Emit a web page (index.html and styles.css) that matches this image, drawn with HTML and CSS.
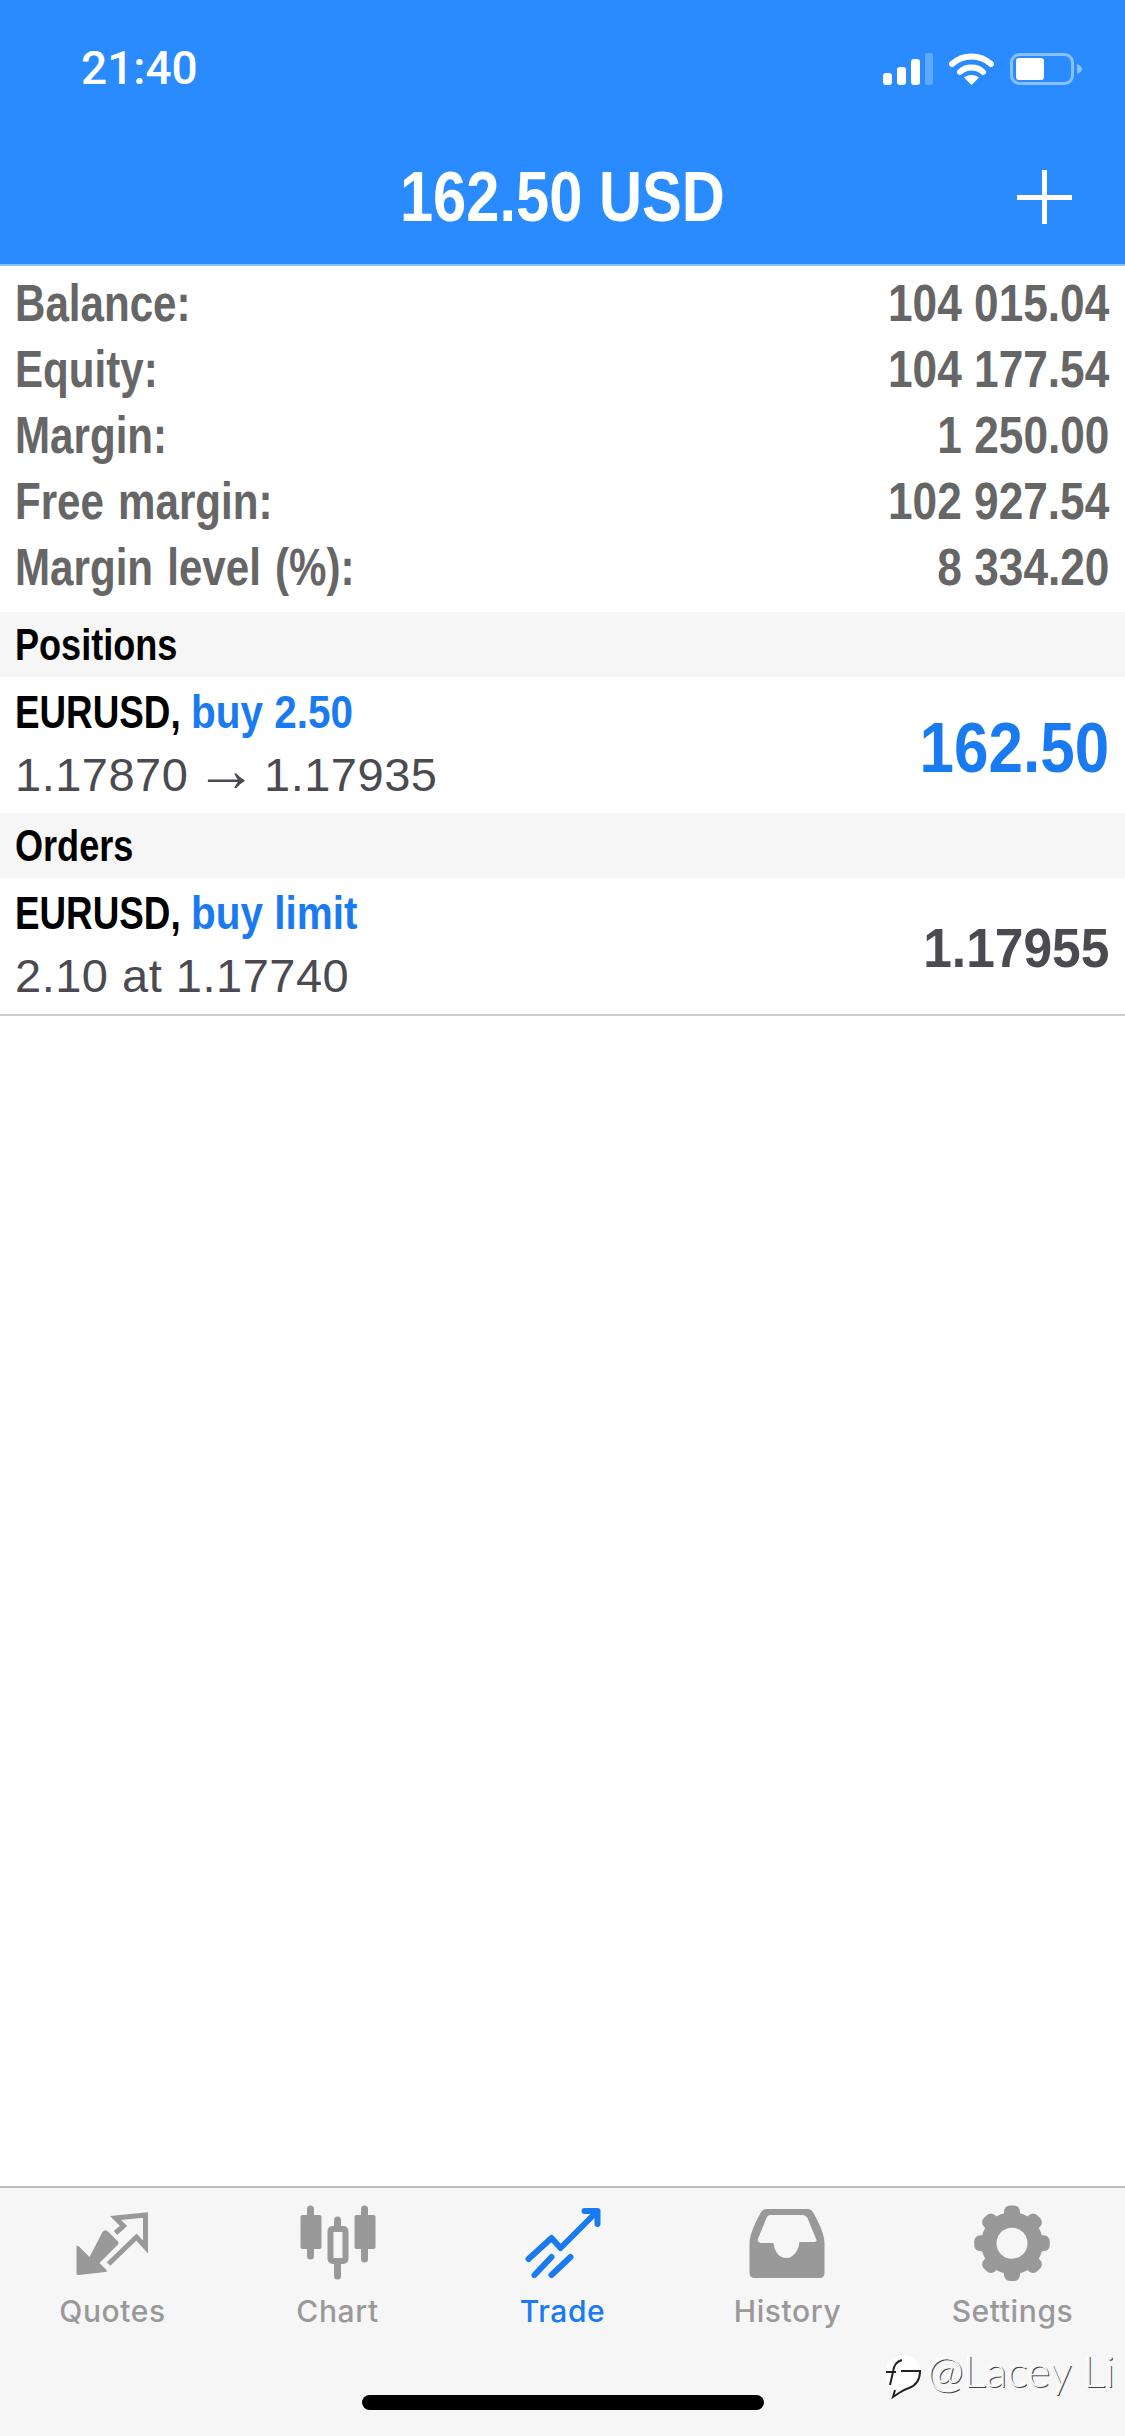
FILE: index.html
```html
<!DOCTYPE html>
<html>
<head>
    <title>Trade</title>
    <link rel="stylesheet" href="styles.css">
</head>
<body>
    <header class="top">
        <div class="status">
            <span class="time">21:40</span>
            <div class="status-icons">
                <svg width="50" height="32" viewBox="0 0 50 32">
                    <rect x="0" y="20" width="9" height="12" rx="3" fill="#fff"/>
                    <rect x="14" y="14" width="9" height="18" rx="3" fill="#fff"/>
                    <rect x="28" y="6" width="9" height="26" rx="3" fill="#fff"/>
                    <rect x="42" y="0" width="8" height="32" rx="2" fill="#fff" opacity="0.25"/>
                </svg>
                <svg width="45" height="32" viewBox="0 0 45 32">
                    <path d="M3 11 C14 1 31 1 42 11" fill="none" stroke="#fff" stroke-width="6" stroke-linecap="round"/>
                    <path d="M11 19 C17 13 28 13 34 19" fill="none" stroke="#fff" stroke-width="6" stroke-linecap="round"/>
                    <path d="M22.5 32 L15 24.5 C19 21 26 21 30 24.5 Z" fill="#fff"/>
                </svg>
                <svg width="72" height="32" viewBox="0 0 72 32">
                    <rect x="1.5" y="1.5" width="61" height="29" rx="8" fill="none" stroke="#fff" stroke-opacity="0.45" stroke-width="3"/>
                    <rect x="6" y="5" width="28" height="22" rx="3" fill="#fff"/>
                    <path d="M67 11 C70 12 72 14 72 16 C72 18 70 20 67 21 Z" fill="#fff" fill-opacity="0.45"/>
                </svg>
            </div>
        </div>
        <div class="title-bar">
            <span></span>
            <h1 class="title">162.50 USD</h1>
            <svg class="plus" width="55" height="54" viewBox="0 0 55 54">
                <rect x="25" y="0" width="5" height="54" fill="#fff"/>
                <rect x="0" y="25" width="55" height="5" fill="#fff"/>
            </svg>
        </div>
    </header>

    <main class="content">
        <section class="summary">
            <div class="summary-row"><span>Balance:</span><span>104 015.04</span></div>
            <div class="summary-row"><span>Equity:</span><span>104 177.54</span></div>
            <div class="summary-row"><span>Margin:</span><span>1 250.00</span></div>
            <div class="summary-row"><span>Free margin:</span><span>102 927.54</span></div>
            <div class="summary-row"><span>Margin level (%):</span><span>8 334.20</span></div>
        </section>

        <h2 class="band"><span>Positions</span></h2>
        <div class="item">
            <div>
                <div class="item-name">EURUSD, <span class="blue">buy 2.50</span></div>
                <div class="item-detail">1.17870 <span class="arrow">→</span> 1.17935</div>
            </div>
            <div class="profit">162.50</div>
        </div>

        <h2 class="band"><span>Orders</span></h2>
        <div class="item item-last">
            <div>
                <div class="item-name">EURUSD, <span class="blue">buy limit</span></div>
                <div class="item-detail">2.10 at 1.17740</div>
            </div>
            <div class="price">1.17955</div>
        </div>
    </main>

    <footer class="tabbar">
        <nav class="tabs">
            <div class="tab">
                <svg width="110" height="95" viewBox="-2.5 0 110 95">
                    <path d="M16 79 L16 52 Q16 50 18 51 L29 62 L42 37 Q44 34 47 36 L57 46 Q59 48 57 50 L39 68 L46 75 Q47 77 45 77 L18 80 Q16 80 16 79 Z" fill="#999"/>
                    <polyline points="48,69 76,42 85,52 85,20 55,23 63,31 55,38" fill="none" stroke="#999" stroke-width="5"/>
                </svg>
                <span>Quotes</span>
            </div>
            <div class="tab">
                <svg width="110" height="95" viewBox="-2.5 0 110 95">
                    <g stroke="#999" stroke-width="7" stroke-linecap="round">
                        <line x1="25" y1="14" x2="25" y2="61"/>
                        <line x1="52" y1="25" x2="52" y2="81"/>
                        <line x1="79" y1="14" x2="79" y2="64"/>
                    </g>
                    <rect x="15" y="20" width="21" height="34" rx="2" fill="#999"/>
                    <rect x="69" y="20" width="21" height="34" rx="2" fill="#999"/>
                    <rect x="45" y="34" width="15" height="32" rx="2" fill="#f6f6f6" stroke="#999" stroke-width="6"/>
                </svg>
                <span>Chart</span>
            </div>
            <div class="tab tab-active">
                <svg width="110" height="95" viewBox="-2.5 0 110 95">
                    <g fill="none" stroke="#1a7af0" stroke-linecap="round" stroke-linejoin="round" stroke-width="6">
                        <polyline points="18,64 41,43 50,53 85,18"/>
                        <polyline points="74,16 87,16 87,29"/>
                        <line x1="24" y1="80" x2="41" y2="62"/>
                        <line x1="41" y1="80" x2="60" y2="62"/>
                    </g>
                </svg>
                <span>Trade</span>
            </div>
            <div class="tab">
                <svg width="110" height="95" viewBox="-2.5 0 110 95">
                    <path fill-rule="evenodd" fill="#999" d="M31 14 H72 Q76 14 78 18 Q89 38 89 48 V78 Q89 83 84 83 H19 Q14 83 14 78 V48 Q14 38 25 18 Q27 14 31 14 Z M35 20 H67 Q70 20 72 23 L81 45 Q81 47 78 47 H64 C63 57 57 63 51 63 C44 63 39 57 38 48 H25 Q22 47 22 45 L31 23 Q32 20 35 20 Z"/>
                </svg>
                <span>History</span>
            </div>
            <div class="tab">
                <svg width="110" height="95" viewBox="-2.5 0 110 95">
                    <g fill="#999">
                        <rect x="43.5" y="10.5" width="16" height="75.5" rx="6"/>
                        <rect x="43.5" y="10.5" width="16" height="75.5" rx="6" transform="rotate(45 51.5 48.25)"/>
                        <rect x="43.5" y="10.5" width="16" height="75.5" rx="6" transform="rotate(90 51.5 48.25)"/>
                        <rect x="43.5" y="10.5" width="16" height="75.5" rx="6" transform="rotate(135 51.5 48.25)"/>
                        <circle cx="51.5" cy="48.25" r="31"/>
                    </g>
                    <circle cx="51.5" cy="48.25" r="15.5" fill="#f6f6f6"/>
                </svg>
                <span>Settings</span>
            </div>
        </nav>
        <div class="home-bar"></div>
        <div class="watermark">
            <svg width="44" height="56" viewBox="0 0 44 56">
                <g transform="translate(0 8)">
                    <circle cx="20" cy="19" r="18" fill="#fff"/>
                    <path d="M8 40 L10 33 Q8 30 8 28 L26 33 Q18 38 8 40 Z" fill="#fff"/>
                    <path d="M3 18 H13 M19 6 Q11 8 10 18 L7 31 M18 17 H37 Q37 30 26 34 Q20 36 16 39 L10 43 L12 36" fill="none" stroke="#222" stroke-width="2"/>
                </g>
            </svg>
            <span>@Lacey Li</span>
        </div>
    </footer>
</body>
</html>
```

FILE: styles.css
```css
* {
    box-sizing: border-box;
}
body {
    margin: 0;
    height: 2436px;
    display: flex;
    flex-direction: column;
    background-color: #fff;
    font-family: "Liberation Sans", Arial, sans-serif;
    overflow: hidden;
}

/* blue header */
.top {
    height: 266px;
    background-color: #2a8bff;
    border-bottom: 2px solid #8fbff7;
    color: #fff;
}
.status {
    height: 100px;
    padding: 41px 43px 0 81px;
    display: flex;
    justify-content: space-between;
    align-items: flex-start;
}
.time {
    font-family: Roboto, sans-serif;
    font-weight: 500;
    font-size: 46px;
    line-height: 54px;
}
.status-icons {
    display: flex;
    align-items: flex-end;
    gap: 16px;
    margin-top: 12px;
}
.title-bar {
    display: grid;
    grid-template-columns: 1fr auto 1fr;
    align-items: center;
    height: 164px;
    padding-top: 30px;
}
.title {
    margin: 0;
    font-size: 71px;
    font-weight: bold;
    line-height: 80px;
    transform: scaleX(0.84);
}
.plus {
    justify-self: end;
    margin-right: 53px;
}

/* account summary */
.content {
    flex: 1;
}
.summary {
    padding: 4px 16px 12px 15px;
}
.summary-row {
    display: flex;
    justify-content: space-between;
    height: 66px;
    font-size: 52px;
    line-height: 66px;
    font-weight: bold;
    color: #666;
}
.summary-row span {
    word-spacing: 3px;
    transform: scaleX(0.81);
    transform-origin: left;
}
.summary-row span:last-child {
    word-spacing: 0;
    transform: scaleX(0.85);
    transform-origin: right;
}
.band {
    margin: 0;
    height: 65px;
    padding-left: 15px;
    background-color: #f6f6f6;
    font-size: 44px;
    line-height: 66px;
    font-weight: bold;
    color: #000;
}
.band span {
    display: inline-block;
    transform: scaleX(0.82);
    transform-origin: left;
}
.item {
    height: 136px;
    padding: 0 16px 3px 15px;
    display: flex;
    justify-content: space-between;
    align-items: center;
}
.item-last {
    height: 138px;
    border-bottom: 2px solid #ccc;
}
.item-name {
    font-size: 46px;
    line-height: 64px;
    font-weight: bold;
    color: #000;
    transform: scaleX(0.8);
    transform-origin: left;
}
.item-name .blue {
    display: inline-block;
    transform: scaleX(1.1);
    transform-origin: left;
}
.blue {
    color: #1a7af0;
}
.item-detail {
    margin-top: -1px;
    font-size: 47px;
    line-height: 64px;
    letter-spacing: 0.5px;
    color: #4a4a50;
}
.arrow {
    margin: 0 -7px;
    font-size: 62px;
    line-height: 40px;
}
.profit {
    margin-top: 9px;
    font-size: 70px;
    font-weight: bold;
    color: #1a7af0;
    transform: scaleX(0.885);
    transform-origin: right;
}
.price {
    margin-top: 6px;
    font-size: 56px;
    font-weight: bold;
    color: #4a4a50;
    transform: scaleX(0.92);
    transform-origin: right;
}

/* bottom tabs */
.tabbar {
    position: relative;
    height: 250px;
    padding-top: 7px;
    background-color: #f6f6f6;
    border-top: 2px solid #bbb;
}
.tabs {
    display: grid;
    grid-template-columns: repeat(5, 1fr);
}
.tab {
    display: flex;
    flex-direction: column;
    align-items: center;
    font-family: Inter, sans-serif;
    font-size: 30px;
    font-weight: 500;
    letter-spacing: 0.6px;
    line-height: 42px;
    color: #999;
}
.tab-active {
    color: #1a7af0;
}
.home-bar {
    width: 402px;
    height: 15px;
    margin: 63px auto 0;
    background-color: #000;
    border-radius: 8px;
}
.watermark {
    position: absolute;
    left: 883px;
    top: 158px;
    display: flex;
    align-items: flex-start;
    font-family: Lato, sans-serif;
    font-weight: 300;
    font-size: 44px;
    line-height: 48px;
    color: #f6f6f6;
    text-shadow: 1px 1px 0 #444, -1px -1px 0 #fff;
    white-space: nowrap;
}
```
